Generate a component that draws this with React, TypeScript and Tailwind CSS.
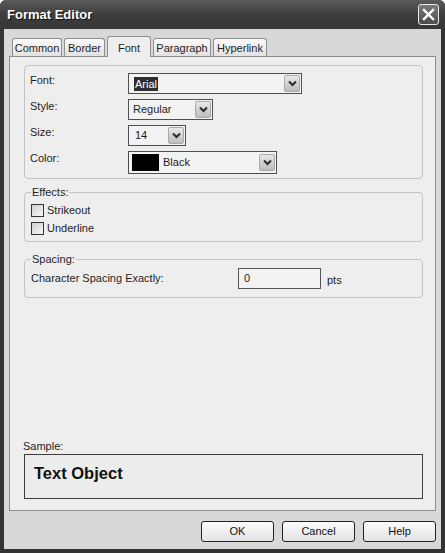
import React from "react";

function Chevron() {
  return (
    <svg width="9" height="7" viewBox="0 0 9 7">
      <path d="M1 1.5 L4.5 5 L8 1.5" fill="none" stroke="#2b2b2b" strokeWidth="2" />
    </svg>
  );
}

function Combo({ className, children }: { className: string; children: React.ReactNode }) {
  return (
    <div className={`flex items-center border border-[#4f4f4f] bg-[#f3f3f3] pr-[1px] ${className}`}>
      <div className="flex-1 flex items-center min-w-0">{children}</div>
      <div className="w-[16px] h-[17px] rounded-[2px] border border-[#a9a9a9] bg-linear-to-b from-[#e8e8e8] to-[#bdbdbd] flex items-center justify-center">
        <Chevron />
      </div>
    </div>
  );
}

function Checkbox({ label }: { label: string }) {
  return (
    <div className="flex items-center h-[13px] gap-[3px]">
      <div className="w-[13px] h-[13px] border border-[#333] bg-linear-to-br from-[#cfcfcf] to-[#f7f7f7]" />
      <span className="leading-[13px]">{label}</span>
    </div>
  );
}

function Btn({ label }: { label: string }) {
  return (
    <div className="w-[73px] h-[21px] rounded-[3px] border border-[#222] bg-linear-to-b from-[#fbfbfb] to-[#e3e3e3] flex items-center justify-center text-[#111]">
      {label}
    </div>
  );
}

const tabs = [
  { name: "Common", w: "w-[50px]" },
  { name: "Border", w: "w-[41px]" },
  { name: "Font", w: "w-[44px]", sel: true },
  { name: "Paragraph", w: "w-[58px]" },
  { name: "Hyperlink", w: "w-[54px]" },
];

export default function App() {
  return (
    <div className="w-[445px] h-[553px] bg-white font-['Liberation_Sans',Arial,sans-serif] text-[11px] text-[#1e1e1e]">
      <div className="w-full h-full flex flex-col bg-[#343434] rounded-t-[6px] overflow-hidden">
        {/* Title bar */}
        <div className="h-[29px] flex items-center justify-between pl-[7px] pr-[6px] bg-linear-to-b from-[#5a5a5a] via-[#3e3e3e] to-[#363636]">
          <span className="text-white font-bold text-[13px] [text-shadow:1px_1px_#111]">Format Editor</span>
          <div className="w-[21px] h-[21px] rounded-[3px] border border-[#e8e8e8] bg-linear-to-b from-[#7a7a7a] to-[#4d4d4d] flex items-center justify-center">
            <svg width="13" height="13" viewBox="0 0 13 13">
              <path d="M2 2 L11 11 M11 2 L2 11" stroke="white" strokeWidth="2.4" strokeLinecap="square" />
            </svg>
          </div>
        </div>

        {/* Body */}
        <div className="flex-1 mx-[4px] mb-[4px] bg-[#d8d8d8] px-[5px] pt-[7px] pb-[7px] flex flex-col">
          {/* Tabs */}
          <div className="h-[20px] flex items-end pl-[3px] gap-[2px]">
            {tabs.map((t) =>
              t.sel ? (
                <div
                  key={t.name}
                  className={`${t.w} h-[21px] -mb-[1px] relative z-10 border border-b-0 border-[#8f8f8f] rounded-t-[3px] bg-[#eeeeee] flex justify-center pt-[3px]`}
                >
                  {t.name}
                </div>
              ) : (
                <div
                  key={t.name}
                  className={`${t.w} h-[18px] border border-b-0 border-[#8f8f8f] rounded-t-[3px] bg-linear-to-b from-[#fafafa] to-[#e2e2e2] flex items-center justify-center pt-[1px]`}
                >
                  {t.name}
                </div>
              )
            )}
          </div>

          {/* Panel */}
          <div className="h-[455px] border border-[#8f8f8f] bg-[#eeeeee] pl-[14px] pr-[12px] pt-[8px] pb-[11px] flex flex-col">
            {/* Font group */}
            <div className="h-[114px] border border-[#c3c3c3] rounded-[4px] pl-[5px] pt-[7px] flex flex-col gap-[5px]">
              <div className="flex items-start h-[21px]">
                <span className="w-[98px] leading-[14px]">Font:</span>
                <Combo className="w-[174px] h-[21px]">
                  <span className="ml-[5px] px-[1px] bg-[#2e2e2e] text-white leading-[14px]">Arial</span>
                </Combo>
              </div>
              <div className="flex items-start h-[21px]">
                <span className="w-[98px] leading-[14px]">Style:</span>
                <Combo className="w-[85px] h-[21px]">
                  <span className="ml-[4px]">Regular</span>
                </Combo>
              </div>
              <div className="flex items-start h-[21px]">
                <span className="w-[98px] leading-[14px]">Size:</span>
                <Combo className="w-[58px] h-[21px]">
                  <span className="ml-[6px]">14</span>
                </Combo>
              </div>
              <div className="flex items-start h-[23px]">
                <span className="w-[98px] leading-[14px]">Color:</span>
                <Combo className="w-[149px] h-[23px]">
                  <div className="ml-[3px] w-[27px] h-[17px] bg-black" />
                  <span className="ml-[4px]">Black</span>
                </Combo>
              </div>
            </div>

            {/* Effects */}
            <fieldset className="mt-[7px] border border-[#c3c3c3] rounded-[4px] pl-[6px] pt-[5px] pb-[6px]">
              <legend className="ml-0 px-[1px] leading-[13px]">Effects:</legend>
              <div className="flex flex-col gap-[5px]">
                <Checkbox label="Strikeout" />
                <Checkbox label="Underline" />
              </div>
            </fieldset>

            {/* Spacing */}
            <fieldset className="mt-[11px] border border-[#c3c3c3] rounded-[4px] pl-[6px] pt-[2px] pb-[8px]">
              <legend className="ml-0 px-[1px] leading-[13px]">Spacing:</legend>
              <div className="flex items-center h-[21px]">
                <span className="w-[207px]">Character Spacing Exactly:</span>
                <div className="w-[83px] h-[21px] border border-[#555] bg-[#f2f2f2] flex items-center pl-[5px]">0</div>
                <span className="ml-[6px] mt-[3px]">pts</span>
              </div>
            </fieldset>

            <div className="flex-1" />

            {/* Sample */}
            <div className="leading-[13px] mb-[1px] -ml-[1px]">Sample:</div>
            <div className="h-[45px] border border-[#3c3c3c] bg-[#ececec] pl-[9px] pt-[8px]">
              <span className="font-bold text-[16.5px] leading-[20px] text-[#111]">Text Object</span>
            </div>
          </div>

          {/* Buttons */}
          <div className="mt-[10px] flex justify-end gap-[8px]">
            <Btn label="OK" />
            <Btn label="Cancel" />
            <Btn label="Help" />
          </div>
        </div>
      </div>
    </div>
  );
}
